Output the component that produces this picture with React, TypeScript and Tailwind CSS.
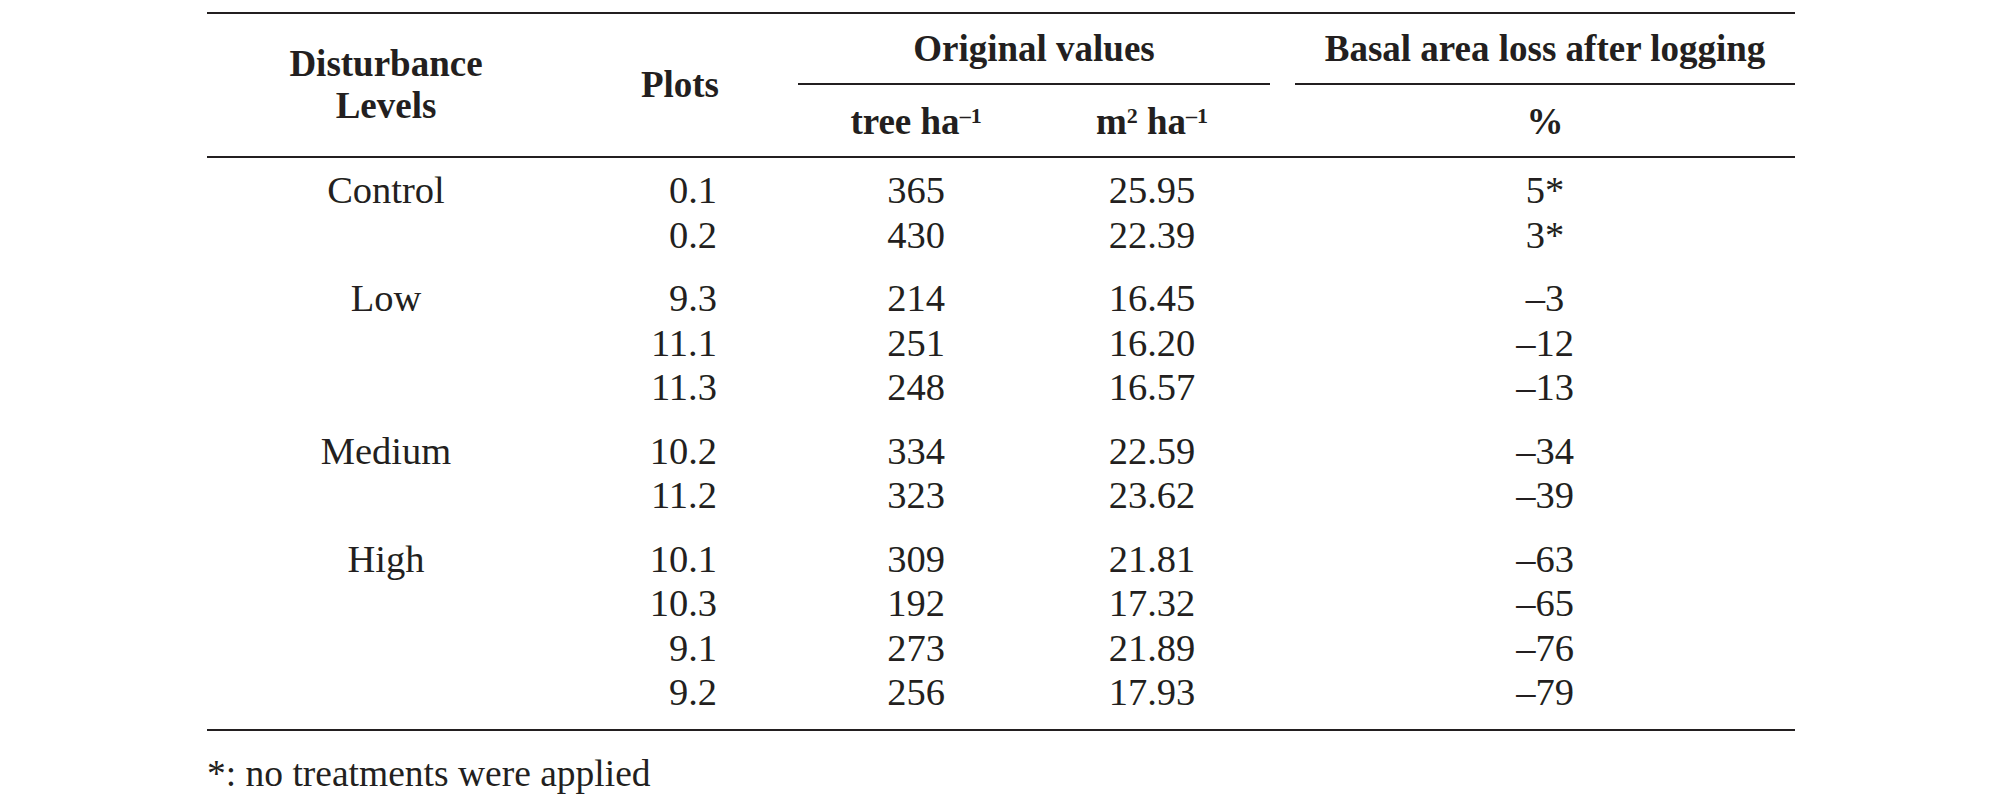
const cols = "grid grid-cols-[358px_154px_79px_236px_236px_25px_500px]";

type Row = { plot: string; trees: string; basal: string; loss: string };
type Group = { level: string; rows: Row[] };

const groups: Group[] = [
  {
    level: "Control",
    rows: [
      { plot: "0.1", trees: "365", basal: "25.95", loss: "5*" },
      { plot: "0.2", trees: "430", basal: "22.39", loss: "3*" },
    ],
  },
  {
    level: "Low",
    rows: [
      { plot: "9.3", trees: "214", basal: "16.45", loss: "–3" },
      { plot: "11.1", trees: "251", basal: "16.20", loss: "–12" },
      { plot: "11.3", trees: "248", basal: "16.57", loss: "–13" },
    ],
  },
  {
    level: "Medium",
    rows: [
      { plot: "10.2", trees: "334", basal: "22.59", loss: "–34" },
      { plot: "11.2", trees: "323", basal: "23.62", loss: "–39" },
    ],
  },
  {
    level: "High",
    rows: [
      { plot: "10.1", trees: "309", basal: "21.81", loss: "–63" },
      { plot: "10.3", trees: "192", basal: "17.32", loss: "–65" },
      { plot: "9.1", trees: "273", basal: "21.89", loss: "–76" },
      { plot: "9.2", trees: "256", basal: "17.93", loss: "–79" },
    ],
  },
];

function Sup({ children }: { children: string }) {
  return <sup className="text-[22px]">{children}</sup>;
}

export default function App() {
  return (
    <div className="min-h-screen bg-white pt-[12px] font-['Liberation_Serif',serif] text-[#231f20]">
      <div className="ml-[207px] w-[1588px]">
        {/* header */}
        <div className={`${cols} border-y-2 border-[#231f20] text-[37px] font-bold leading-[42px]`}>
          <div className="col-start-1 row-span-2 row-start-1 flex flex-col items-center justify-center">
            <span>Disturbance</span>
            <span>Levels</span>
          </div>
          <div className="col-start-2 row-span-2 row-start-1 flex items-center justify-end">Plots</div>
          <div className="col-span-2 col-start-4 row-start-1 border-b-2 border-[#231f20] pb-[13px] pt-[14px] text-center">
            Original values
          </div>
          <div className="col-start-7 row-start-1 border-b-2 border-[#231f20] pb-[13px] pt-[14px] text-center">
            Basal area loss after logging
          </div>
          <div className="col-start-4 row-start-2 pb-[13px] pt-[16px] text-center">
            tree ha<Sup>–1</Sup>
          </div>
          <div className="col-start-5 row-start-2 pb-[13px] pt-[16px] text-center">
            m<Sup>2</Sup> ha<Sup>–1</Sup>
          </div>
          <div className="col-start-7 row-start-2 pb-[13px] pt-[16px] text-center">%</div>
        </div>

        {/* body */}
        <div className="flex flex-col gap-[19px] border-b-2 border-[#231f20] pb-[14.5px] pt-[10px] text-[38.5px] leading-[44.5px]">
          {groups.map((g) => (
            <div key={g.level}>
              {g.rows.map((r, i) => (
                <div key={r.plot} className={cols}>
                  <div className="text-center">{i === 0 ? g.level : ""}</div>
                  <div className="pr-[2px] text-right">{r.plot}</div>
                  <div />
                  <div className="text-center">{r.trees}</div>
                  <div className="text-center">{r.basal}</div>
                  <div />
                  <div className="text-center">{r.loss}</div>
                </div>
              ))}
            </div>
          ))}
        </div>

        <p className="mt-[24px] text-[37.5px] leading-[38px]">*: no treatments were applied</p>
      </div>
    </div>
  );
}
